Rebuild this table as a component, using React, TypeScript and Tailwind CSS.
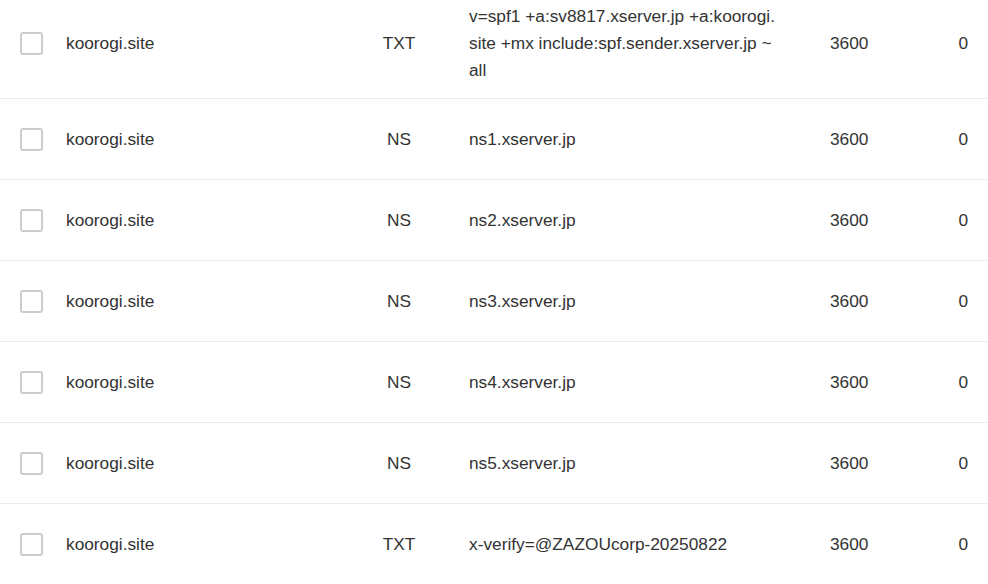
import React from "react";

type Row = { name: string; type: string; value: React.ReactNode; ttl: string; prio: string };

const rows: Row[] = [
  {
    name: "koorogi.site",
    type: "TXT",
    value: (
      <>
        v=spf1 +a:sv8817.xserver.jp +a:koorogi.
        <br />
        site +mx include:spf.sender.xserver.jp ~
        <br />
        all
      </>
    ),
    ttl: "3600",
    prio: "0",
  },
  { name: "koorogi.site", type: "NS", value: "ns1.xserver.jp", ttl: "3600", prio: "0" },
  { name: "koorogi.site", type: "NS", value: "ns2.xserver.jp", ttl: "3600", prio: "0" },
  { name: "koorogi.site", type: "NS", value: "ns3.xserver.jp", ttl: "3600", prio: "0" },
  { name: "koorogi.site", type: "NS", value: "ns4.xserver.jp", ttl: "3600", prio: "0" },
  { name: "koorogi.site", type: "NS", value: "ns5.xserver.jp", ttl: "3600", prio: "0" },
  { name: "koorogi.site", type: "TXT", value: "x-verify=@ZAZOUcorp-20250822", ttl: "3600", prio: "0" },
];

export default function App() {
  return (
    <div
      className="w-[988px] h-[584px] overflow-hidden bg-white text-[#333333] text-[17.3px] leading-[27px]"
      style={{ fontFamily: '"Liberation Sans", Arial, sans-serif' }}
    >
      <div className="-mt-[11px]">
        {rows.map((r, i) => (
          <div
            key={i}
            className={`flex items-center min-h-[81px] py-[14px] ${i < rows.length - 1 ? "border-b border-[#ececec]" : ""}`}
          >
            <div className="w-[66px] shrink-0 flex items-center">
              <div className="ml-[20px] w-[23px] h-[23px] border-2 border-[#cccccc] rounded-[3px] bg-white" />
            </div>
            <div className="w-[274px] shrink-0">{r.name}</div>
            <div className="w-[118px] shrink-0 text-center">{r.type}</div>
            <div className="w-[372px] shrink-0 pl-[11px]">{r.value}</div>
            <div className="flex-1">{r.ttl}</div>
            <div className="w-[80px] shrink-0 text-right pr-[20px]">{r.prio}</div>
          </div>
        ))}
      </div>
    </div>
  );
}
